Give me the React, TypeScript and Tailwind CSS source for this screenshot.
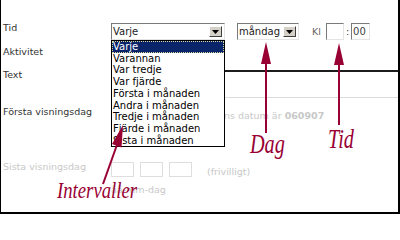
import React from "react";

const items = [
  "Varje",
  "Varannan",
  "Var tredje",
  "Var fjärde",
  "Första i månaden",
  "Andra i månaden",
  "Tredje i månaden",
  "Fjärde i månaden",
  "Sista i månaden",
];

const ArrowButton = () => (
  <div className="absolute right-[2px] top-[2px] bottom-[2px] flex w-[13px] items-center justify-center border border-t-white border-l-white border-b-[#404040] border-r-[#404040] bg-[#d4d0c8]">
    <svg width="7" height="4" viewBox="0 0 7 4">
      <polygon points="0,0 7,0 3.5,4" fill="#000" />
    </svg>
  </div>
);

const Select = ({ value, width }: { value: string; width: string }) => (
  <div
    className={`relative h-[17px] shrink-0 border border-t-[#7a7a7a] border-l-[#7a7a7a] border-b-[#e4e4e4] border-r-[#e4e4e4] bg-white pl-[1px] text-[10px] leading-[15px] text-[#222] ${width}`}
  >
    {value}
    <ArrowButton />
  </div>
);

const DateBoxes = () => (
  <div className="flex gap-[6px]">
    <div className="h-[15px] w-[23px] border border-[#dedede] bg-white" />
    <div className="h-[15px] w-[23px] border border-[#dedede] bg-white" />
    <div className="h-[15px] w-[23px] border border-[#dedede] bg-white" />
  </div>
);

const App = () => {
  return (
    <div className="relative h-[214px] w-[400px] overflow-hidden border-b-2 border-l border-r-2 border-black bg-white pl-[2px] pt-[23px] font-['DejaVu_Sans',sans-serif] text-[9.5px] leading-[10px] text-[#333]">
      {/* Tid */}
      <div className="flex h-[17px] items-start">
        <div className="w-[108px] shrink-0">Tid</div>
        <Select value="Varje" width="w-[114px]" />
        <div className="ml-[12px]">
          <Select value="måndag" width="w-[62px]" />
        </div>
        <div className="ml-[13px] leading-[17px] text-[#666]">Kl</div>
        <div className="ml-[5px] h-[17px] w-[18px] border border-t-[#7a7a7a] border-l-[#7a7a7a] border-b-[#e4e4e4] border-r-[#e4e4e4]" />
        <div className="mx-[2px] leading-[17px]">:</div>
        <div className="h-[17px] w-[19px] border border-t-[#7a7a7a] border-l-[#7a7a7a] border-b-[#e4e4e4] border-r-[#e4e4e4] pl-[1px] text-[10px] leading-[15px] text-[#444]">
          00
        </div>
      </div>

      {/* Aktivitet */}
      <div className="mt-[7px] flex h-[23px] items-start">
        <div className="w-[108px] shrink-0">Aktivitet</div>
      </div>

      {/* Text */}
      <div className="flex h-[28px] items-start">
        <div className="w-[108px] shrink-0">Text</div>
        <div className="-mr-4 h-[28px] flex-1 border-t-2 border-b border-l border-t-[#1c1c1c] border-b-[#dcdcdc] border-l-[#808080]" />
      </div>

      {/* Första visningsdag */}
      <div className="mt-[9px] flex items-start">
        <div className="w-[108px] shrink-0">Första visningsdag</div>
        <div>
          <div className="flex items-start">
            <DateBoxes />
            <div className="ml-[7px] mt-[4px] text-[#c8c8c8]">
              Dagens datum är <span className="font-bold">060907</span>
            </div>
          </div>
          <div className="mt-[8px] text-[#c8c8c8]">åå-mm-dag</div>
        </div>
      </div>

      {/* Sista visningsdag */}
      <div className="mt-[22px] flex items-start text-[#c8c8c8]">
        <div className="w-[108px] shrink-0">Sista visningsdag</div>
        <div>
          <div className="flex items-start">
            <DateBoxes />
            <div className="ml-[15px] mt-[5px]">(frivilligt)</div>
          </div>
          <div className="mt-[8px]">åå-mm-dag</div>
        </div>
      </div>

      {/* open dropdown list */}
      <div className="absolute left-[110px] top-[40px] w-[114px] border border-black bg-white text-[10px] leading-[11.7px] text-black">
        {items.map((item, i) =>
          i === 0 ? (
            <div
              key={item}
              className="bg-[#0a246a] px-[1px] text-white outline-1 -outline-offset-1 outline-dotted outline-[#d8d8a0]"
            >
              {item}
            </div>
          ) : (
            <div key={item} className="px-[1px]">
              {item}
            </div>
          )
        )}
      </div>

      {/* annotations */}
      <svg
        className="pointer-events-none absolute left-[-1px] top-0"
        width="400"
        height="214"
        viewBox="0 0 400 214"
      >
        <line x1="266" y1="62" x2="266" y2="133" stroke="#990033" strokeWidth="2" />
        <polygon points="266,42 261,64 271,64" fill="#990033" />
        <line x1="339" y1="63" x2="339" y2="125" stroke="#990033" strokeWidth="2" />
        <polygon points="339,43 334,65 344,65" fill="#990033" />
        <line x1="103" y1="184" x2="118" y2="142" stroke="#990033" strokeWidth="2" />
        <polygon points="123,125 112,144 121.5,147.5" fill="#990033" />
      </svg>

      <div className="pointer-events-none absolute left-[249px] top-[131px] origin-left scale-x-[0.75] font-['Liberation_Serif',serif] text-[27px] italic leading-none text-[#990033]">
        Dag
      </div>
      <div className="pointer-events-none absolute left-[327px] top-[126px] origin-left scale-x-[0.75] font-['Liberation_Serif',serif] text-[27px] italic leading-none text-[#990033]">
        Tid
      </div>
      <div className="pointer-events-none absolute left-[56px] top-[178px] origin-left scale-x-[0.78] font-['Liberation_Serif',serif] text-[24px] italic leading-none text-[#990033]">
        Intervaller
      </div>
    </div>
  );
};

export default App;
